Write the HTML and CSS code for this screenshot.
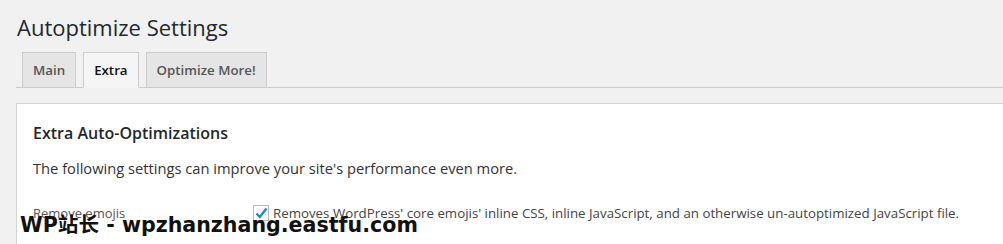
FILE: index.html
```html
<!DOCTYPE html>
<html lang="en">
<head>
    <meta charset="utf-8">
    <title>Autoptimize Settings</title>
    <link rel="stylesheet" href="styles.css">
</head>
<body>
<div class="wrap">
    <h1 class="page-title">Autoptimize Settings</h1>
    <nav class="tab-wrapper">
        <a class="tab" href="#">Main</a>
        <a class="tab tab-active" href="#">Extra</a>
        <a class="tab" href="#">Optimize More!</a>
    </nav>
    <div class="card">
        <h2 class="card-title">Extra Auto-Optimizations</h2>
        <p class="card-text">The following settings can improve your site's performance even more.</p>
        <div class="row">
            <span class="row-label">Remove emojis</span>
            <label class="row-field">
                <span class="checkbox">
                    <svg width="13" height="12" viewBox="0 0 13 12"><path d="M1.5 6.5 L4.8 10 L11.5 1.5" fill="none" stroke="#1e8cbe" stroke-width="2.4"/></svg>
                </span>
                Removes WordPress' core emojis' inline CSS, inline JavaScript, and an otherwise un-autoptimized JavaScript file.
            </label>
        </div>
    </div>
</div>
<div class="watermark">WP站长 - wpzhanzhang.eastfu.com</div>
</body>
</html>
```

FILE: styles.css
```css
*, *::before, *::after {
    margin: 0;
    padding: 0;
    box-sizing: border-box;
}

html, body {
    height: 244px;
    overflow: hidden;
}

body {
    position: relative;
    background-color: #f1f1f1;
    color: #23282d;
    font-family: "Open Sans", "Noto Sans", sans-serif;
    font-size: 14px;
}

.wrap {
    padding: 13px 0 0 16px;
    width: 1040px;
}

.page-title {
    font-size: 22px;
    font-weight: 400;
    line-height: 29px;
    color: #23282d;
    padding-left: 1px;
}

.tab-wrapper {
    display: flex;
    gap: 7px;
    margin-top: 10px;
    padding-left: 6px;
    border-bottom: 1px solid #ccc;
}

.tab {
    display: block;
    margin-bottom: -1px;
    border: 1px solid #ccc;
    padding: 5px 10px;
    background-color: #e5e5e5;
    color: #555;
    font-size: 13.3px;
    font-weight: 600;
    line-height: 24px;
    text-decoration: none;
}

.tab-active {
    background-color: #f5f5f5;
    border-bottom-color: #f5f5f5;
    color: #111;
}

.card {
    margin-top: 15px;
    border: 1px solid #d5d5d5;
    background-color: #fff;
    padding: 18px 16px 20px;
    height: 150px;
}

.card-title {
    font-size: 16px;
    font-weight: 600;
    line-height: 22px;
    color: #23282d;
}

.card-text {
    margin-top: 13px;
    font-size: 14.7px;
    line-height: 22px;
    color: #333;
}

.row {
    display: flex;
    align-items: center;
    margin-top: 25px;
}

.row-label {
    width: 220px;
    font-size: 13px;
    color: #555;
}

.row-field {
    display: flex;
    align-items: center;
    gap: 4px;
    font-size: 13.3px;
    color: #444;
}

.checkbox {
    display: inline-flex;
    align-items: center;
    justify-content: center;
    width: 16px;
    height: 16px;
    border: 1px solid #b4b9be;
    background-color: #fff;
}

.watermark {
    position: absolute;
    left: 20px;
    top: 208px;
    font-family: "DejaVu Sans", "Noto Sans CJK SC", sans-serif;
    font-size: 20.6px;
    font-weight: 700;
    color: #111;
    white-space: nowrap;
}
```
